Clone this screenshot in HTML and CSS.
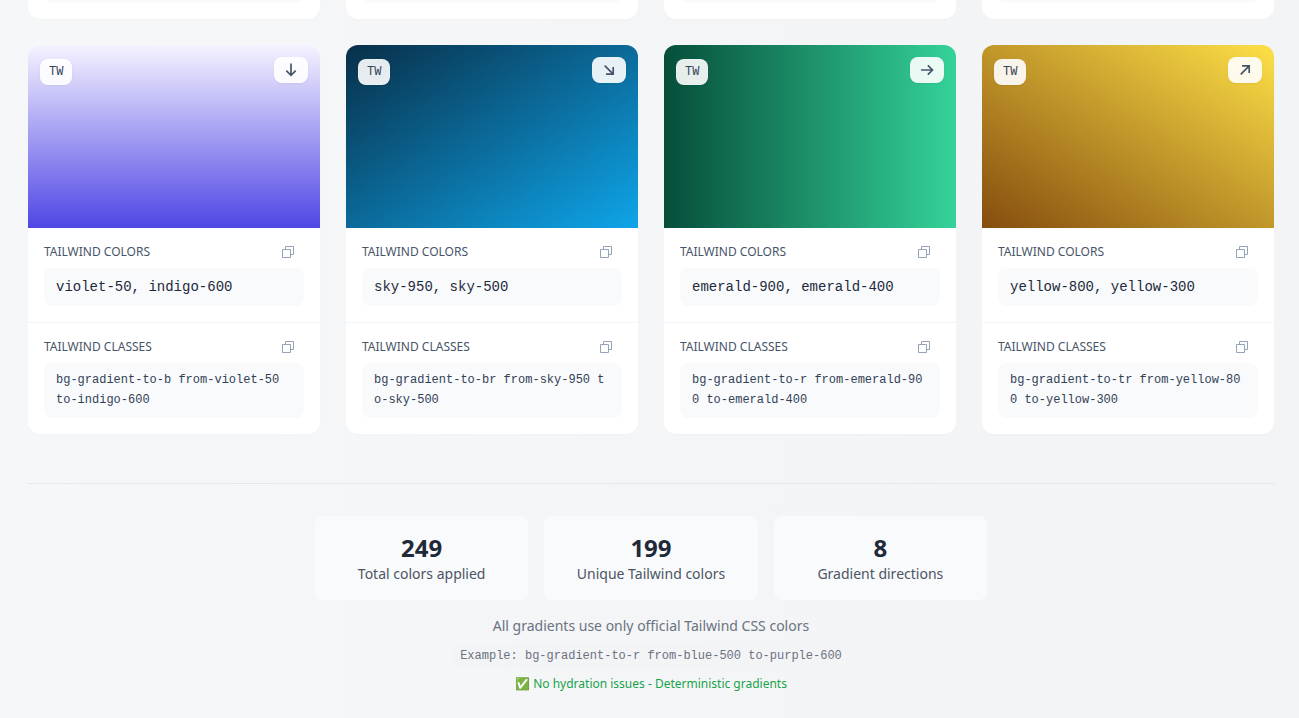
FILE: index.html
```html
<!DOCTYPE html>
<html lang="en">

<head>
  <meta charset="UTF-8">
  <meta name="viewport" content="width=device-width, initial-scale=1.0">
  <title>Tailwind gradients</title>
  <link rel="stylesheet" href="styles.css">
</head>

<body>
  <svg class="sprite" aria-hidden="true">
    <symbol id="icon-copy" viewBox="0 0 12 12">
      <path d="M0.5 3.5h8v8h-8z M3.5 3.5v-3h8v8h-3" fill="none" stroke="currentColor" />
    </symbol>
  </svg>

  <main class="container">
    <div class="grid">
      <div class="card card-end"><div class="code-end"></div></div>
      <div class="card card-end"><div class="code-end"></div></div>
      <div class="card card-end"><div class="code-end"></div></div>
      <div class="card card-end"><div class="code-end"></div></div>

      <article class="card">
        <div class="preview violet">
          <span class="badge">TW</span>
          <span class="badge direction">
            <svg viewBox="0 0 14 14"><path d="M7 0.5V12.5 M2.3 7.6L7 12.3L11.7 7.6" /></svg>
          </span>
        </div>
        <section class="section">
          <header class="section-header">
            <h3>TAILWIND COLORS</h3>
            <button class="copy" type="button" aria-label="Copy colors"><svg><use href="#icon-copy" /></svg></button>
          </header>
          <code class="colors">violet-50, indigo-600</code>
        </section>
        <section class="section">
          <header class="section-header">
            <h3>TAILWIND CLASSES</h3>
            <button class="copy" type="button" aria-label="Copy classes"><svg><use href="#icon-copy" /></svg></button>
          </header>
          <code class="classes">bg-gradient-to-b from-violet-50 to-indigo-600</code>
        </section>
      </article>

      <article class="card">
        <div class="preview sky">
          <span class="badge">TW</span>
          <span class="badge direction">
            <svg viewBox="0 0 14 14"><path d="M2.7 2.7L11.2 11.2 M11.2 4V11.2H4" /></svg>
          </span>
        </div>
        <section class="section">
          <header class="section-header">
            <h3>TAILWIND COLORS</h3>
            <button class="copy" type="button" aria-label="Copy colors"><svg><use href="#icon-copy" /></svg></button>
          </header>
          <code class="colors">sky-950, sky-500</code>
        </section>
        <section class="section">
          <header class="section-header">
            <h3>TAILWIND CLASSES</h3>
            <button class="copy" type="button" aria-label="Copy classes"><svg><use href="#icon-copy" /></svg></button>
          </header>
          <code class="classes">bg-gradient-to-br from-sky-950 to-sky-500</code>
        </section>
      </article>

      <article class="card">
        <div class="preview emerald">
          <span class="badge">TW</span>
          <span class="badge direction">
            <svg viewBox="0 0 14 14"><path d="M1 7H12.7 M7.8 2.3L12.5 7L7.8 11.7" /></svg>
          </span>
        </div>
        <section class="section">
          <header class="section-header">
            <h3>TAILWIND COLORS</h3>
            <button class="copy" type="button" aria-label="Copy colors"><svg><use href="#icon-copy" /></svg></button>
          </header>
          <code class="colors">emerald-900, emerald-400</code>
        </section>
        <section class="section">
          <header class="section-header">
            <h3>TAILWIND CLASSES</h3>
            <button class="copy" type="button" aria-label="Copy classes"><svg><use href="#icon-copy" /></svg></button>
          </header>
          <code class="classes">bg-gradient-to-r from-emerald-900 to-emerald-400</code>
        </section>
      </article>

      <article class="card">
        <div class="preview yellow">
          <span class="badge">TW</span>
          <span class="badge direction">
            <svg viewBox="0 0 14 14"><path d="M2.7 11.3L11.2 2.8 M4 2.8H11.2V10" /></svg>
          </span>
        </div>
        <section class="section">
          <header class="section-header">
            <h3>TAILWIND COLORS</h3>
            <button class="copy" type="button" aria-label="Copy colors"><svg><use href="#icon-copy" /></svg></button>
          </header>
          <code class="colors">yellow-800, yellow-300</code>
        </section>
        <section class="section">
          <header class="section-header">
            <h3>TAILWIND CLASSES</h3>
            <button class="copy" type="button" aria-label="Copy classes"><svg><use href="#icon-copy" /></svg></button>
          </header>
          <code class="classes">bg-gradient-to-tr from-yellow-800 to-yellow-300</code>
        </section>
      </article>
    </div>

    <footer class="footer">
      <div class="stats">
        <div class="stat">
          <div class="stat-value">249</div>
          <div class="stat-label">Total colors applied</div>
        </div>
        <div class="stat">
          <div class="stat-value">199</div>
          <div class="stat-label">Unique Tailwind colors</div>
        </div>
        <div class="stat">
          <div class="stat-value">8</div>
          <div class="stat-label">Gradient directions</div>
        </div>
      </div>
      <p class="note">All gradients use only official Tailwind CSS colors</p>
      <code class="example">Example: bg-gradient-to-r from-blue-500 to-purple-600</code>
      <p class="status">✅ No hydration issues - Deterministic gradients</p>
    </footer>
  </main>
</body>

</html>
```

FILE: styles.css
```css
* {
  box-sizing: border-box;
}

body {
  margin: 0;
  min-height: 100vh;
  font-family: "Noto Sans", sans-serif;
  background: linear-gradient(to right, #f6f7f9, #f3f4f6 80%);
}

h3,
p {
  margin: 0;
}

code {
  font-family: "Liberation Mono", monospace;
}

.sprite {
  display: none;
}

.container {
  padding: 0 24px 26px 27px;
}

.grid {
  display: grid;
  grid-template-columns: repeat(4, 1fr);
  gap: 26px;
  padding: 0 1px;
}

.card {
  background: #fff;
  border-radius: 12px;
  overflow: hidden;
  box-shadow: 0 1px 2px rgba(0, 0, 0, 0.02);
}

/* bottom of the row above */
.card-end {
  padding: 0 16px 16px;
  border-top-left-radius: 0;
  border-top-right-radius: 0;
}

.code-end {
  height: 19px;
  margin-top: -16px;
  background: #f8fafc;
  border-radius: 8px;
}

.preview {
  display: flex;
  justify-content: space-between;
  align-items: flex-start;
  height: 183px;
  padding: 12px;
}

.violet {
  background: linear-gradient(to bottom, #f5f3ff, #4f46e5);
}

.sky {
  background: linear-gradient(to bottom right, #082f49, #0ea5e9);
}

.emerald {
  background: linear-gradient(to right, #064e3b, #34d399);
}

.yellow {
  background: linear-gradient(to top right, #854d0e, #fde047);
}

.badge {
  margin-top: 2px;
  padding: 4px 8px;
  border: 1px solid rgba(255, 255, 255, 0.2);
  border-radius: 8px;
  background: rgba(255, 255, 255, 0.9);
  box-shadow: 0 1px 2px rgba(0, 0, 0, 0.05);
  color: #334155;
  font-family: "Liberation Mono", monospace;
  font-size: 12px;
  line-height: 16px;
}

.direction {
  display: flex;
  justify-content: center;
  align-items: center;
  width: 34px;
  height: 26px;
  margin-top: 0;
  padding: 0;
}

.direction svg {
  width: 14px;
  height: 14px;
  fill: none;
  stroke: #475569;
  stroke-width: 1.7;
}

.section {
  padding: 12px 16px 16px;
}

.section + .section {
  border-top: 1px solid #f1f5f9;
}

.section-header {
  display: flex;
  justify-content: space-between;
  align-items: center;
  margin-bottom: 4px;
}

.section-header h3 {
  color: #475569;
  font-size: 12px;
  font-weight: 400;
  line-height: 16px;
}

.copy {
  display: flex;
  justify-content: center;
  align-items: center;
  width: 32px;
  height: 24px;
  padding: 0;
  border: 0;
  background: none;
  color: #94a3b8;
  cursor: pointer;
}

.copy svg {
  width: 12px;
  height: 12px;
}

.colors,
.classes {
  display: block;
  border-radius: 8px;
  background: #f8fafc;
  word-break: break-all;
}

.colors {
  padding: 8px 12px;
  color: #1e293b;
  font-size: 14px;
  line-height: 22px;
}

.classes {
  padding: 7px 12px 8px;
  color: #334155;
  font-size: 12px;
  line-height: 20px;
}

.footer {
  display: flex;
  flex-direction: column;
  align-items: center;
  gap: 8px;
  margin-top: 49px;
  padding-top: 32px;
  border-top: 1px solid #e5e7eb;
}

.stats {
  display: grid;
  grid-template-columns: repeat(3, 1fr);
  gap: 16px;
  width: 100%;
  max-width: 672px;
  margin-bottom: 8px;
  text-align: center;
}

.stat {
  padding: 16px;
  border-radius: 8px;
  background: #f9fafb;
}

.stat-value {
  color: #1f2937;
  font-size: 24px;
  font-weight: 700;
  line-height: 32px;
}

.stat-label {
  color: #4b5563;
  font-size: 14px;
  line-height: 20px;
}

.note {
  color: #6b7280;
  font-size: 14px;
  line-height: 20px;
}

.example {
  padding: 4px 8px;
  border-radius: 4px;
  background: #f3f4f6;
  color: #6b7280;
  font-size: 12px;
  line-height: 16px;
}

.status {
  color: #16a34a;
  font-size: 12px;
  line-height: 16px;
}
```
